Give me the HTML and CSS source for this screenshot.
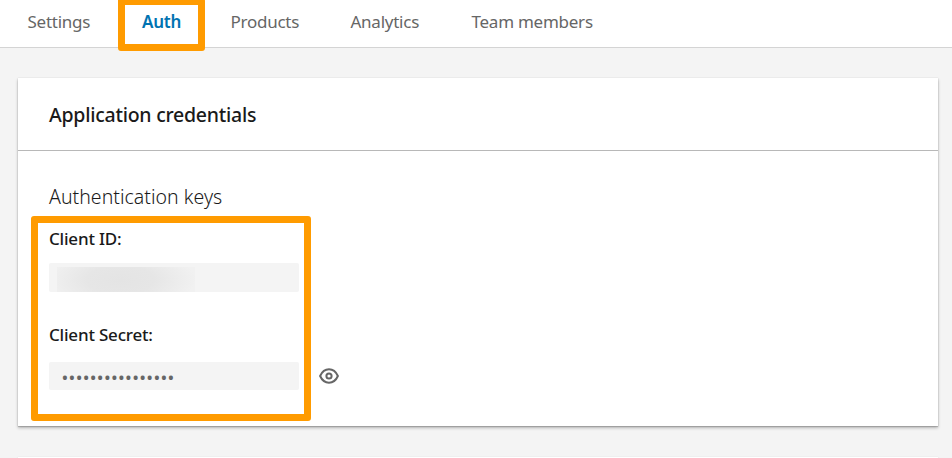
FILE: index.html
```html
<!DOCTYPE html>
<html lang="en">
<head>
<meta charset="utf-8">
<title>Application credentials</title>
<link rel="stylesheet" href="styles.css">
</head>
<body>
<nav class="tabs">
  <a class="tab tab-settings">Settings</a>
  <a class="tab tab-auth">Auth<span class="mark mark-tab"></span></a>
  <a class="tab tab-products">Products</a>
  <a class="tab tab-analytics">Analytics</a>
  <a class="tab tab-team">Team members</a>
</nav>
<main class="content">
  <section class="card">
    <header class="card-header"><h2 class="title">Application credentials</h2></header>
    <div class="card-body">
      <h3 class="subtitle">Authentication keys</h3>
      <div class="keys">
        <span class="mark mark-keys"></span>
        <div class="label label-id">Client ID:</div>
        <div class="field field-id"><span class="redacted"></span></div>
        <div class="label label-secret">Client Secret:</div>
        <div class="secret-row">
          <div class="field field-secret">••••••••••••••••</div>
          <svg class="eye" width="20" height="16" viewBox="0 0 20 16" fill="none" stroke="#666">
            <path d="M1.1 8C3 3.8 6 1.3 10 1.3S17 3.8 18.9 8C17 12.2 14 14.7 10 14.7S3 12.2 1.1 8Z" stroke-width="2" stroke-linejoin="round"/>
            <circle cx="10" cy="8" r="2.6" stroke-width="2"/>
          </svg>
        </div>
      </div>
    </div>
  </section>
  <section class="card card-next"></section>
</main>
</body>
</html>
```
FILE: styles.css
```css
* { box-sizing: border-box; }
body {
  margin: 0;
  height: 458px;
  overflow: hidden;
  background: #f4f4f4;
  color: #1a1a1a;
  font-family: "Noto Sans", "Open Sans", sans-serif;
}
.tabs {
  display: flex;
  height: 48px;
  padding-left: 27.5px;
  background: #fff;
  border-bottom: 1px solid #d4d4d4;
}
.tab {
  position: relative;
  height: 47px;
  line-height: 43px;
  font-size: 17px;
  letter-spacing: -0.25px;
  color: #666;
  white-space: nowrap;
}
.tab-settings { width: 114.5px; }
.tab-auth { width: 88.5px; color: #0073b1; font-weight: 600; }
.tab-products { width: 120px; }
.tab-analytics { width: 121px; }
.mark {
  position: absolute;
  z-index: 2;
  border: 7px solid #ff9b00;
  border-radius: 3px;
  pointer-events: none;
}
.mark-tab { left: -24.5px; top: -2px; width: 87px; height: 52.5px; }
.content { padding: 30px 14px 0 18px; }
.card {
  height: 348px;
  background: #fff;
  box-shadow: 0 0 1px rgba(0,0,0,.15), 0 1px 1px rgba(0,0,0,.15), 0 2px 3px rgba(0,0,0,.25);
}
.card-header {
  height: 73px;
  padding-left: 31px;
  border-bottom: 1px solid #b8b8b8;
}
.title { margin: 0; font-size: 19.5px; line-height: 74px; font-weight: 500; letter-spacing: -0.25px; }
.card-body { padding: 31px 31px 0; }
.subtitle { margin: 0; font-size: 19.5px; line-height: 30px; font-weight: 350; letter-spacing: 0.03px; }
.keys { position: relative; padding-top: 15px; }
.mark-keys { left: -18px; top: 4px; width: 280px; height: 205px; }
.label { height: 24px; line-height: 24px; font-size: 17px; font-weight: 500; letter-spacing: -0.2px; }
.field {
  width: 250px;
  height: 29px;
  border-radius: 2px;
  background: #f4f4f4;
}
.field-id { margin: 12px 0 31px; padding: 4px 0 0 8px; }
.redacted {
  display: block;
  width: 138px;
  height: 25px;
  background: radial-gradient(ellipse 75px 32px at 46% 52%, #e4e4e4 0%, #e6e6e6 45%, #ececec 75%, #f1f1f1 100%);
}
.secret-row { display: flex; align-items: center; gap: 20px; margin-top: 15px; }
.field-secret {
  height: 28px;
  padding-left: 12.5px;
  line-height: 31px;
  font-size: 18px;
  letter-spacing: 0.3px;
  color: #666;
}
.card-next { height: 1px; margin-top: 31px; }
```
